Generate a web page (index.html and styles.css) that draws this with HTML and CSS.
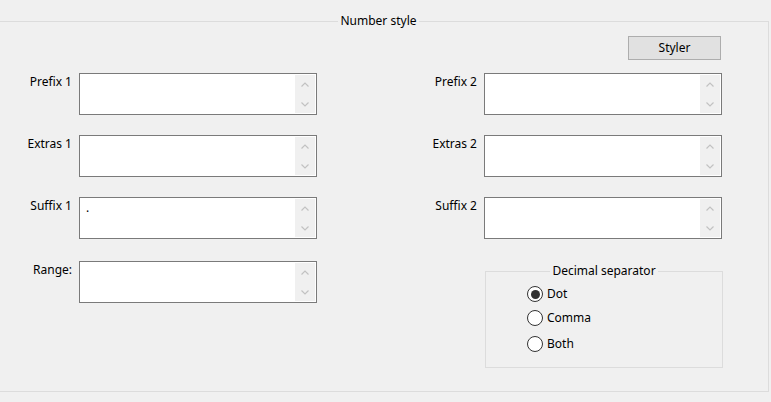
FILE: index.html
```html
<!DOCTYPE html>
<html>
<head>
<meta charset="utf-8">
<link rel="stylesheet" href="styles.css">
</head>
<body>
<fieldset class="group">
  <legend class="group-title">Number style</legend>
  <div class="toolbar"><button class="btn">Styler</button></div>
  <div class="cols">
    <div class="col col-left">
      <div class="row"><label class="lbl">Prefix 1</label><div class="box"><div class="txt"></div><div class="sb"><span class="arr"><svg width="8" height="5" viewBox="0 0 8 5"><path d="M0.5 4.5 L4 1 L7.5 4.5" fill="none" stroke="#c2c2c2" stroke-width="1.2"/></svg></span><span class="arr"><svg width="8" height="5" viewBox="0 0 8 5"><path d="M0.5 0.5 L4 4 L7.5 0.5" fill="none" stroke="#c2c2c2" stroke-width="1.2"/></svg></span></div></div></div>
      <div class="row"><label class="lbl">Extras 1</label><div class="box"><div class="txt"></div><div class="sb"><span class="arr"><svg width="8" height="5" viewBox="0 0 8 5"><path d="M0.5 4.5 L4 1 L7.5 4.5" fill="none" stroke="#c2c2c2" stroke-width="1.2"/></svg></span><span class="arr"><svg width="8" height="5" viewBox="0 0 8 5"><path d="M0.5 0.5 L4 4 L7.5 0.5" fill="none" stroke="#c2c2c2" stroke-width="1.2"/></svg></span></div></div></div>
      <div class="row"><label class="lbl">Suffix 1</label><div class="box"><div class="txt">.</div><div class="sb"><span class="arr"><svg width="8" height="5" viewBox="0 0 8 5"><path d="M0.5 4.5 L4 1 L7.5 4.5" fill="none" stroke="#c2c2c2" stroke-width="1.2"/></svg></span><span class="arr"><svg width="8" height="5" viewBox="0 0 8 5"><path d="M0.5 0.5 L4 4 L7.5 0.5" fill="none" stroke="#c2c2c2" stroke-width="1.2"/></svg></span></div></div></div>
      <div class="row row-range"><label class="lbl">Range:</label><div class="box"><div class="txt"></div><div class="sb"><span class="arr"><svg width="8" height="5" viewBox="0 0 8 5"><path d="M0.5 4.5 L4 1 L7.5 4.5" fill="none" stroke="#c2c2c2" stroke-width="1.2"/></svg></span><span class="arr"><svg width="8" height="5" viewBox="0 0 8 5"><path d="M0.5 0.5 L4 4 L7.5 0.5" fill="none" stroke="#c2c2c2" stroke-width="1.2"/></svg></span></div></div></div>
    </div>
    <div class="col col-right">
      <div class="row"><label class="lbl">Prefix 2</label><div class="box"><div class="txt"></div><div class="sb"><span class="arr"><svg width="8" height="5" viewBox="0 0 8 5"><path d="M0.5 4.5 L4 1 L7.5 4.5" fill="none" stroke="#c2c2c2" stroke-width="1.2"/></svg></span><span class="arr"><svg width="8" height="5" viewBox="0 0 8 5"><path d="M0.5 0.5 L4 4 L7.5 0.5" fill="none" stroke="#c2c2c2" stroke-width="1.2"/></svg></span></div></div></div>
      <div class="row"><label class="lbl">Extras 2</label><div class="box"><div class="txt"></div><div class="sb"><span class="arr"><svg width="8" height="5" viewBox="0 0 8 5"><path d="M0.5 4.5 L4 1 L7.5 4.5" fill="none" stroke="#c2c2c2" stroke-width="1.2"/></svg></span><span class="arr"><svg width="8" height="5" viewBox="0 0 8 5"><path d="M0.5 0.5 L4 4 L7.5 0.5" fill="none" stroke="#c2c2c2" stroke-width="1.2"/></svg></span></div></div></div>
      <div class="row"><label class="lbl">Suffix 2</label><div class="box"><div class="txt"></div><div class="sb"><span class="arr"><svg width="8" height="5" viewBox="0 0 8 5"><path d="M0.5 4.5 L4 1 L7.5 4.5" fill="none" stroke="#c2c2c2" stroke-width="1.2"/></svg></span><span class="arr"><svg width="8" height="5" viewBox="0 0 8 5"><path d="M0.5 0.5 L4 4 L7.5 0.5" fill="none" stroke="#c2c2c2" stroke-width="1.2"/></svg></span></div></div></div>
      <fieldset class="subgroup">
        <legend class="group-title">Decimal separator</legend>
        <div class="radios">
          <div class="radio"><span class="dot on"></span><span>Dot</span></div>
          <div class="radio radio-mid"><span class="dot"></span><span>Comma</span></div>
          <div class="radio"><span class="dot"></span><span>Both</span></div>
        </div>
      </fieldset>
    </div>
  </div>
</fieldset>
</body>
</html>
```
FILE: styles.css
```css
html, body {
  margin: 0;
  padding: 0;
  background: #f0f0f0;
  width: 771px;
  height: 402px;
  overflow: hidden;
}
body {
  font-family: "Noto Sans", "DejaVu Sans", sans-serif;
  font-size: 12px;
  line-height: 16px;
  color: #000;
}
.group {
  box-sizing: border-box;
  margin: 13px 0 0 -12px;
  width: 781px;
  height: 379px;
  padding: 0;
  border: 1px solid #dcdcdc;
}
.group-title {
  margin-inline: auto;
  padding: 0 2px;
  line-height: 16px;
}
.toolbar {
  display: flex;
  justify-content: flex-end;
  padding-right: 47px;
  margin-top: 7px;
}
.btn {
  box-sizing: border-box;
  width: 93px;
  height: 24px;
  background: #e1e1e1;
  border: 1px solid #adadad;
  font: inherit;
  color: #000;
  padding: 0;
}
.cols {
  display: flex;
  margin-top: 13px;
  padding-left: 23px;
}
.col {
  display: flex;
  flex-direction: column;
}
.col-right {
  margin-left: 100px;
}
.row {
  display: flex;
  margin-bottom: 20px;
}
.row-range {
  margin-top: 2px;
}
.lbl {
  width: 60px;
  text-align: right;
  margin-right: 7px;
  padding-top: 1px;
}
.box {
  box-sizing: border-box;
  width: 238px;
  height: 42px;
  background: #fff;
  border: 1px solid #7a7a7a;
  display: flex;
  padding: 1px;
}
.txt {
  flex: 1;
  padding: 1px 0 0 5px;
}
.sb {
  width: 20px;
  background: #f0f0f0;
  display: flex;
  flex-direction: column;
  justify-content: space-between;
  align-items: center;
}
.arr {
  height: 18px;
  display: flex;
  align-items: center;
  justify-content: center;
}
.subgroup {
  box-sizing: border-box;
  margin: 4px 0 0 68px;
  width: 238px;
  height: 105px;
  padding: 0;
  border: 1px solid #dcdcdc;
}
.radios {
  padding: 7px 0 0 41px;
}
.radio {
  display: flex;
  align-items: center;
  gap: 4px;
  height: 16px;
  margin-bottom: 8px;
}
.radio-mid {
  margin-bottom: 10px;
}
.dot {
  box-sizing: border-box;
  width: 16px;
  height: 16px;
  border: 1.3px solid #333;
  border-radius: 50%;
  background: #fff;
  display: flex;
  align-items: center;
  justify-content: center;
}
.dot.on::after {
  content: "";
  width: 9px;
  height: 9px;
  border-radius: 50%;
  background: #333;
}
```
